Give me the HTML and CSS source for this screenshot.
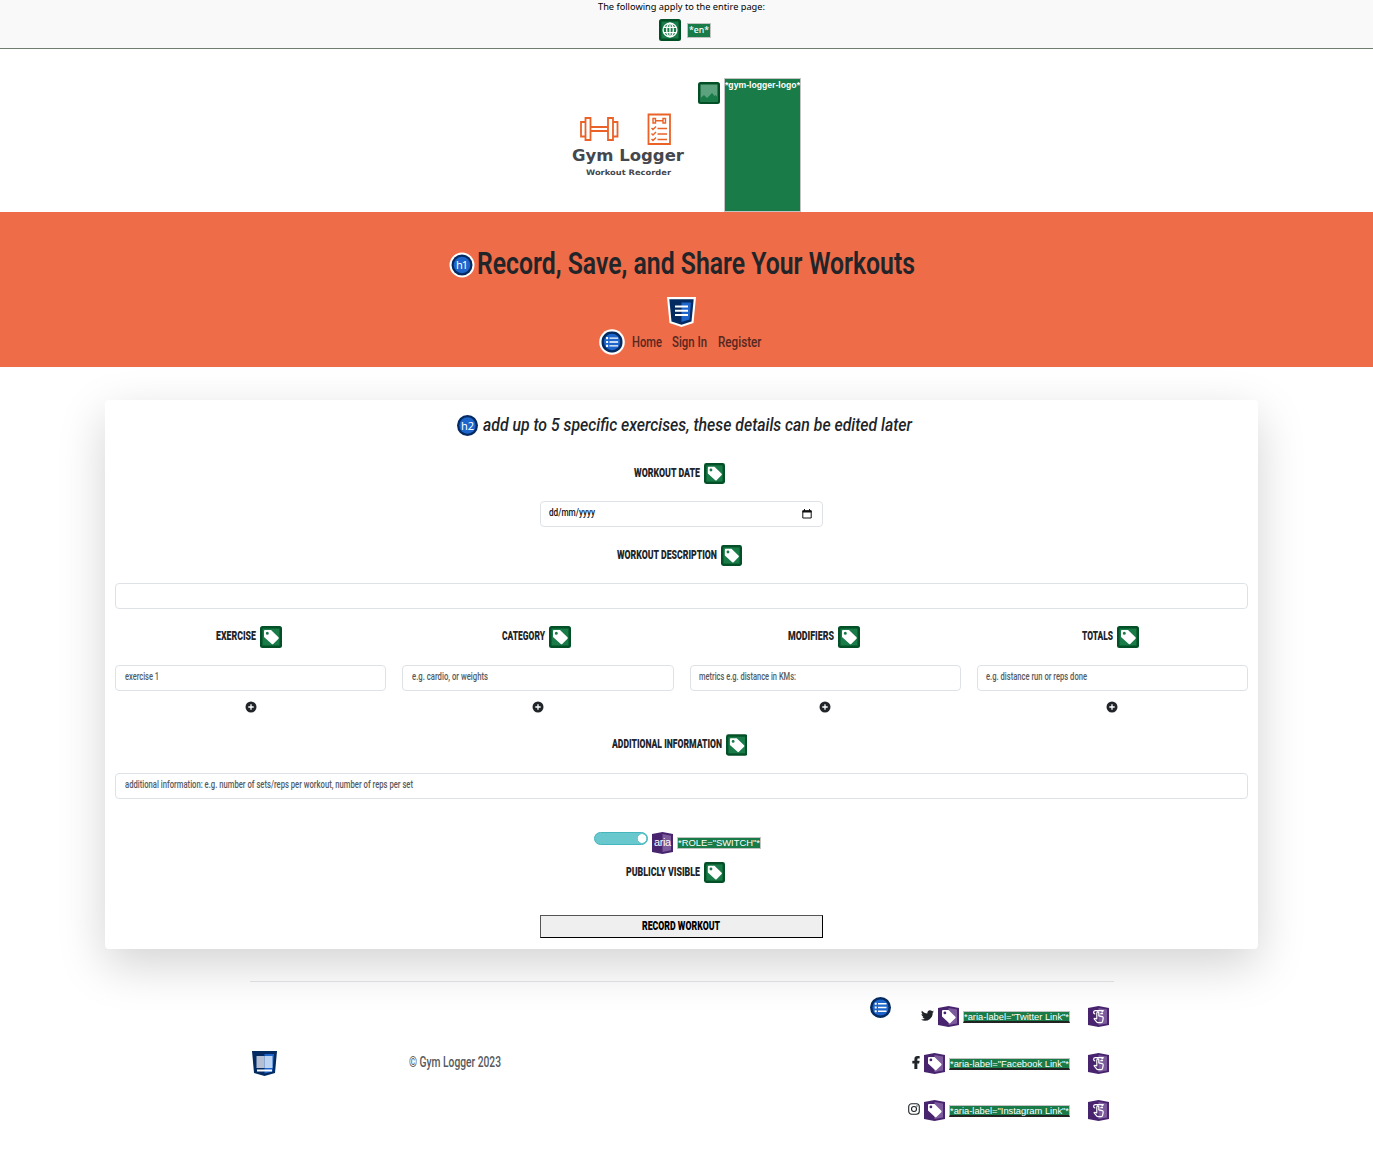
FILE: index.html
```html
<!DOCTYPE html>
<html lang="en">
<head>
<meta charset="utf-8">
<title>Gym Logger</title>
<link rel="stylesheet" href="styles.css">
</head>
<body>
<svg class="defs" width="0" height="0">
  <symbol id="tag" viewBox="0 0 22 22">
    <rect width="22" height="22" rx="2.5" fill="#035027"/><rect x="2.5" y="2.5" width="17" height="17" fill="#187b48"/>
    <path fill="#fff" fill-rule="evenodd" d="M4 5a1 1 0 0 1 1-1h6l7.500 7.300a1 1 0 0 1 0 1.400l-5.300 5.300a1 1 0 0 1-1.400 0L4 11zM7.300 5.800a1.500 1.500 0 1 0 0 3 1.500 1.500 0 0 0 0-3z"/>
  </symbol>
  <symbol id="hex" viewBox="0 0 21 21">
    <path fill="#48246f" d="M0 2 10.500 0 21 2V19L10.500 21 0 19z"/><path fill="#7c5a9c" d="M10.500 2 19 3.500V17.500L10.500 19z"/>
  </symbol>
  <symbol id="atag" viewBox="0 0 21 21">
    <use href="#hex" width="21" height="21"/>
    <path fill="#fff" fill-rule="evenodd" d="M4 5a1 1 0 0 1 1-1h5.500l6.800 6.800a1 1 0 0 1 0 1.400l-4.900 4.900a1 1 0 0 1-1.400 0L4 10.500zM6.900 5.500a1.400 1.400 0 1 0 0 2.800 1.400 1.400 0 0 0 0-2.800z"/>
  </symbol>
  <symbol id="touch" viewBox="0 0 21 21">
    <use href="#hex" width="21" height="21"/>
    <path fill="none" stroke="#fff" stroke-width="1.200" stroke-linejoin="round" stroke-linecap="round" d="M8.800 12.200V6.900a1 1 0 0 1 2 0V9.800l3.400.9c.8.200 1.100.6 1 1.400l-.6 3.300c-.2.900-.6 1.200-1.300 1.200H10c-.7 0-1-.2-1.400-.7L6 12.700c.5-.8 1.300-.6 2.800.2M6.800 7.800C5 7.300 5.300 4.700 7.300 4.700h8M15.300 4.700 14 6M12.800 7.700h1.800"/>
  </symbol>
  <symbol id="list" viewBox="0 0 21 21">
    <circle cx="10.500" cy="10.500" r="10.500" fill="#042a62"/><circle cx="10.500" cy="10.500" r="8" fill="#1d65ca"/>
    <path fill="#fff" d="M4.700 5.700h2v2h-2zM4.700 9.500h2v2h-2zM4.700 13.300h2v2h-2zM8 6h8.500v1.400H8zM8 9.800h8.500v1.400H8zM8 13.600h8.500V15H8z"/>
  </symbol>
  <symbol id="plus" viewBox="0 0 12 12">
    <circle cx="6" cy="6" r="5.500" fill="#212529"/><path stroke="#fff" stroke-width="1.300" d="M6 3.300v5.400M3.300 6h5.400"/>
  </symbol>
</svg>

<div class="topbar">
  <svg class="t note" width="167" height="14"><text y="10" textLength="167" lengthAdjust="spacingAndGlyphs">The following apply to the entire page:</text></svg>
  <div class="lang">
    <svg width="22" height="22" viewBox="0 0 22 22"><rect width="22" height="22" rx="2.500" fill="#035027"/><rect x="2.500" y="2.500" width="17" height="17" fill="#187b48"/><g fill="none" stroke="#fff" stroke-width="1.300"><circle cx="11" cy="11" r="6.900"/><ellipse cx="11" cy="11" rx="3.300" ry="6.900"/><path d="M11 4v14M5 8.300h12M5 13.700h12"/></g></svg>
    <span class="chip en"><svg class="t" width="20" height="12"><text y="8" textLength="20" lengthAdjust="spacingAndGlyphs">*en*</text></svg></span>
  </div>
</div>

<header class="brand">
  <svg class="logo" width="120" height="80" viewBox="0 0 120 80">
    <g fill="none" stroke="#ea6227" stroke-width="1.800">
      <path d="M17.500 9h5v22h-5zM13 13h4.500v14.500H13zM40 9h5v22h-5zM45 13h4.500v14.500H45zM22.500 18h17.500v4H22.500z"/>
      <path d="M80.500 5.500h21.500v29.500H80.500z"/>
      <path stroke-width="1.400" d="M85 9.500h2.500v4.500H85zM95 9.500h2.500v4.500H95zM87.500 11.700H95M83.500 19l1.500 1.500 3-3M89.500 19.500H99M83.500 24.500l1.500 1.500 3-3M89.500 25H99M83.500 30 85 31.500l3-3M89.500 30.500H99"/>
    </g>
    <text class="name" x="4" y="52" textLength="112" lengthAdjust="spacingAndGlyphs">Gym Logger</text>
    <text class="sub" x="18" y="66" textLength="85" lengthAdjust="spacingAndGlyphs">Workout Recorder</text>
  </svg>
  <svg class="pic" width="22" height="22" viewBox="0 0 22 22"><rect width="22" height="22" rx="2.500" fill="#035027"/><rect x="2.500" y="2.500" width="17" height="17" fill="#5ca27f"/><path fill="#187b48" d="M2.500 16 6 13l3 3 5-5 2.500 3 1-1 2 2v4.500h-17z"/></svg>
  <span class="chip alt"><svg class="t" width="75" height="14"><text y="9" textLength="75" lengthAdjust="spacingAndGlyphs">*gym-logger-logo*</text></svg></span>
</header>

<section class="hero">
  <div class="title">
    <svg width="26" height="26" viewBox="0 0 26 26"><circle cx="13" cy="13" r="12.500" fill="#fff"/><circle cx="13" cy="13" r="10.500" fill="#042a62"/><circle cx="13" cy="13" r="8.300" fill="#1d65ca"/><text class="ic" x="7" y="17" textLength="12">h1</text></svg>
    <h1><svg class="t" width="438" height="40"><text y="30" textLength="438" lengthAdjust="spacingAndGlyphs">Record, Save, and Share Your Workouts</text></svg></h1>
  </div>
  <svg class="shield" width="29" height="30" viewBox="0 0 29 30"><path fill="#fff" d="M0 0h29l-2.500 26L14.500 30 2.500 26z"/><path fill="#042a62" d="M2.300 2.200h24.400L24.500 24.500l-10 3.200-10-3.200z"/><path fill="#1d65ca" d="M14.500 5.500h9.500l-1.500 17-8 2.500z"/><path fill="#fff" d="M8 8.500h13v2H8zM8 12.800h13v2H8zM8 17h13v2H8z"/></svg>
  <nav>
    <svg width="26" height="26" viewBox="0 0 26 26"><circle cx="13" cy="13" r="12.800" fill="#fff"/><use href="#list" x="2.300" y="2.300" width="21.400" height="21.400"/></svg>
    <svg class="t" width="30" height="26"><text y="18" textLength="30" lengthAdjust="spacingAndGlyphs">Home</text></svg>
    <svg class="t" width="35" height="26"><text y="18" textLength="35" lengthAdjust="spacingAndGlyphs">Sign In</text></svg>
    <svg class="t" width="44" height="26"><text y="18" textLength="43.500" lengthAdjust="spacingAndGlyphs">Register</text></svg>
  </nav>
</section>

<main class="card">
  <div class="lead">
    <svg width="21" height="21" viewBox="0 0 21 21"><circle cx="10.500" cy="10.500" r="10.500" fill="#042a62"/><circle cx="10.500" cy="10.500" r="8.200" fill="#1d65ca"/><text class="ic" x="4" y="15" textLength="13">h2</text></svg>
    <h2><svg class="t" width="430" height="25"><text y="16" textLength="429" lengthAdjust="spacingAndGlyphs">add up to 5 specific exercises, these details can be edited later</text></svg></h2>
  </div>
  <div class="label first"><svg class="t" width="66" height="22"><text y="14" textLength="66" lengthAdjust="spacingAndGlyphs">WORKOUT DATE</text></svg><svg width="21" height="21"><use href="#tag"/></svg></div>
  <div class="field date">
    <svg class="t" width="47" height="24"><text y="14" textLength="46" lengthAdjust="spacingAndGlyphs">dd/mm/yyyy</text></svg>
    <svg width="10" height="10" viewBox="0 0 10 10"><path fill="none" stroke="#111" d="M.8 2h8.400v7H.8z"/><path fill="#111" d="M.5 1.200h9v2.300h-9zM2 0h1v2H2zM7 0h1v2H7z"/></svg>
  </div>
  <div class="label"><svg class="t" width="100" height="22"><text y="14" textLength="100" lengthAdjust="spacingAndGlyphs">WORKOUT DESCRIPTION</text></svg><svg width="21" height="21"><use href="#tag"/></svg></div>
  <div class="field"></div>
  <div class="cols">
    <div class="col"><div class="label"><svg class="t" width="40" height="22"><text y="14" textLength="40" lengthAdjust="spacingAndGlyphs">EXERCISE</text></svg><svg width="22" height="22"><use href="#tag"/></svg></div><div class="field ph"><svg class="t" width="34" height="24"><text y="14" textLength="34" lengthAdjust="spacingAndGlyphs">exercise 1</text></svg></div><svg class="add" width="12" height="12"><use href="#plus"/></svg></div>
    <div class="col"><div class="label"><svg class="t" width="43" height="22"><text y="14" textLength="43" lengthAdjust="spacingAndGlyphs">CATEGORY</text></svg><svg width="22" height="22"><use href="#tag"/></svg></div><div class="field ph"><svg class="t" width="76" height="24"><text y="14" textLength="76" lengthAdjust="spacingAndGlyphs">e.g. cardio, or weights</text></svg></div><svg class="add" width="12" height="12"><use href="#plus"/></svg></div>
    <div class="col"><div class="label"><svg class="t" width="46" height="22"><text y="14" textLength="46" lengthAdjust="spacingAndGlyphs">MODIFIERS</text></svg><svg width="22" height="22"><use href="#tag"/></svg></div><div class="field ph"><svg class="t" width="98" height="24"><text y="14" textLength="97" lengthAdjust="spacingAndGlyphs">metrics e.g. distance in KMs:</text></svg></div><svg class="add" width="12" height="12"><use href="#plus"/></svg></div>
    <div class="col"><div class="label"><svg class="t" width="31" height="22"><text y="14" textLength="31" lengthAdjust="spacingAndGlyphs">TOTALS</text></svg><svg width="22" height="22"><use href="#tag"/></svg></div><div class="field ph"><svg class="t" width="101" height="24"><text y="14" textLength="101" lengthAdjust="spacingAndGlyphs">e.g. distance run or reps done</text></svg></div><svg class="add" width="12" height="12"><use href="#plus"/></svg></div>
  </div>
  <div class="label info"><svg class="t" width="110" height="22"><text y="14" textLength="110" lengthAdjust="spacingAndGlyphs">ADDITIONAL INFORMATION</text></svg><svg width="21.500" height="22"><use href="#tag"/></svg></div>
  <div class="field ph"><svg class="t" width="289" height="24"><text y="14" textLength="288" lengthAdjust="spacingAndGlyphs">additional information: e.g. number of sets/reps per workout, number of reps per set</text></svg></div>
  <div class="switch-row">
    <span class="switch"></span>
    <svg class="aria" width="21" height="22" viewBox="0 0 21 21" preserveAspectRatio="none"><use href="#hex" width="21" height="21"/><text class="ic" x="2" y="13.500" textLength="17">aria</text></svg>
    <span class="chip role"><svg class="t" width="82" height="11"><text y="8" textLength="82" lengthAdjust="spacingAndGlyphs">*ROLE="SWITCH"*</text></svg></span>
  </div>
  <div class="label public"><svg class="t" width="74" height="22"><text y="14" textLength="74" lengthAdjust="spacingAndGlyphs">PUBLICLY VISIBLE</text></svg><svg width="21" height="21"><use href="#tag"/></svg></div>
  <div class="submit"><svg class="t" width="79" height="21"><text y="14" textLength="78" lengthAdjust="spacingAndGlyphs">RECORD WORKOUT</text></svg></div>
</main>

<footer>
  <svg class="foot" width="25" height="25" viewBox="0 0 25 25"><path fill="#042a62" d="M0 0h25l-2 22-10.500 3L2 22z"/><path fill="#1d65ca" d="M12.500 3H22l-1.500 17.500-8 2z"/><path fill="#b4bfd3" d="M4.500 5h8v12h-8z"/><path fill="#bcd3f1" d="M12.500 5h8v12h-8z"/><path fill="#fff" d="M5 18.500h15v2H5z"/></svg>
  <svg class="t copy" width="92" height="24"><text y="16" textLength="92" lengthAdjust="spacingAndGlyphs">© Gym Logger 2023</text></svg>
  <svg class="ul" width="21" height="21"><use href="#list"/></svg>
  <div class="social">
    <div class="link">
      <svg class="brandic" width="13" height="13" viewBox="0 0 512 512"><path fill="#212529" d="M459.400 151.700c.3 4.500.3 9.100.3 13.600 0 138.700-105.600 298.600-298.600 298.600-59.500 0-114.700-17.200-161.100-47.100 8.400 1 16.600 1.300 25.300 1.300 49.100 0 94.200-16.600 130.300-44.800-46.100-1-84.800-31.200-98.100-72.800 6.500 1 13 1.600 19.800 1.600 9.400 0 18.800-1.300 27.600-3.600-48.100-9.700-84.100-52-84.100-103v-1.300c14 7.800 30.200 12.700 47.400 13.300-28.300-18.800-46.800-51-46.800-87.400 0-19.500 5.200-37.400 14.300-53 51.700 63.700 129.300 105.300 216.400 109.800-1.600-7.800-2.600-15.900-2.600-24 0-57.800 46.800-104.900 104.900-104.900 30.200 0 57.500 12.700 76.700 33.100 23.700-4.500 46.500-13.300 66.600-25.300-7.800 24.400-24.400 44.800-46.100 57.800 21.100-2.300 41.600-8.100 60.400-16.200-14.300 20.800-32.200 39.300-52.600 54.300z"/></svg>
      <svg width="21" height="21"><use href="#atag"/></svg>
      <span class="chip aria-chip"><svg class="t" width="105" height="10"><text y="8" textLength="105" lengthAdjust="spacingAndGlyphs">*aria-label="Twitter Link"*</text></svg></span>
      <svg class="tap" width="21" height="21"><use href="#touch"/></svg>
    </div>
    <div class="link">
      <svg class="brandic" width="8" height="13" viewBox="0 0 320 512"><path fill="#212529" stroke="#212529" stroke-width="18" d="M279.100 288l14.200-92.700h-88.900v-60.100c0-25.400 12.400-50.100 52.200-50.100h40.400V6.300S260.400 0 225.400 0c-73.200 0-121.100 44.400-121.100 124.700v70.600H22.900V288h81.400v224h100.200V288z"/></svg>
      <svg width="21" height="21"><use href="#atag"/></svg>
      <span class="chip aria-chip"><svg class="t" width="119" height="10"><text y="8" textLength="119" lengthAdjust="spacingAndGlyphs">*aria-label="Facebook Link"*</text></svg></span>
      <svg class="tap" width="21" height="21"><use href="#touch"/></svg>
    </div>
    <div class="link">
      <svg class="brandic" width="12" height="12" viewBox="0 0 12 12"><g fill="none" stroke="#212529" stroke-width="1.100"><rect x=".7" y=".7" width="10.600" height="10.600" rx="3"/><circle cx="6" cy="6" r="2.500"/></g><circle cx="9" cy="3" r=".7" fill="#212529"/></svg>
      <svg width="21" height="21"><use href="#atag"/></svg>
      <span class="chip aria-chip"><svg class="t" width="119" height="10"><text y="8" textLength="119" lengthAdjust="spacingAndGlyphs">*aria-label="Instagram Link"*</text></svg></span>
      <svg class="tap" width="21" height="21"><use href="#touch"/></svg>
    </div>
  </div>
</footer>
</body>
</html>
```
FILE: styles.css
```css
* { box-sizing: border-box; }
body { margin: 0; height: 1149px; overflow: hidden; background: #fff; color: #212529; font-family: Roboto, "Liberation Sans", sans-serif; }
svg { display: block; flex: none; }
.defs { position: absolute; }
.t { overflow: visible; fill: currentColor; }
h1, h2 { margin: 0; }

.topbar { height: 49px; background: #f9f9f9; border-bottom: 1px solid #6f7f6f; padding-right: 10px; display: flex; flex-direction: column; align-items: center; }
.note { font: 9.5px "Noto Sans", "Open Sans", sans-serif; color: #000; }
.lang { display: flex; align-items: center; gap: 6px; margin-top: 5px; padding-left: 7px; }
.chip { display: block; flex: none; background: #187b48; border: 1px solid #c3c3c3; color: #fff; font-family: "Liberation Sans", Arial, sans-serif; }
.en { width: 24px; height: 15px; padding: 1px; font: 500 9.5px "Noto Sans", sans-serif; }

.brand { height: 163px; display: flex; align-items: flex-start; padding-left: 568px; }
.logo { margin-top: 60px; }
.logo .name { font: bold 15.5px "DejaVu Sans", sans-serif; fill: #44474d; }
.logo .sub { font: bold 7.5px "DejaVu Sans", sans-serif; fill: #44474d; }
.pic { margin: 33px 4px 0 10px; }
.alt { width: 77px; height: 134px; margin-top: 29px; font-size: 9px; font-weight: bold; }

.hero { height: 155px; background: #ee6c48; padding: 32px 10px 0 0; display: flex; flex-direction: column; align-items: center; }
.title { display: flex; height: 53px; gap: 2px; }
.title > svg { margin-top: 8px; }
h1 { font-size: 31px; font-weight: 600; }
.ic { font: 11px "Noto Sans", sans-serif; fill: #fff; }
.aria .ic { font-family: "Liberation Sans", sans-serif; }
nav { display: flex; margin-top: 2px; gap: 10.5px; padding-right: 2.5px; font-size: 14.5px; font-weight: 500; color: #57271f; }
nav svg:first-child { margin-right: -4px; }

.card { width: 1153px; height: 549px; margin: 33px 0 0 105px; padding: 15px 10px 0; border-radius: 4px; background: #fff; box-shadow: 0 16px 48px rgba(0,0,0,.175); }
.lead { display: flex; justify-content: center; gap: 5px; height: 21px; padding-left: 6px; }
h2 { font-size: 19px; font-style: italic; font-weight: 500; }
.label { height: 22px; margin: 18px 0 17px; padding-right: 4px; display: flex; justify-content: center; gap: 4px; font-size: 12.5px; font-weight: 900; }
.label.first { margin-top: 27px; margin-bottom: 16px; }
.field { height: 26px; border: 1px solid #dee2e6; border-radius: 4px; padding: 0 9px; display: flex; font-size: 10px; font-weight: 500; }
.field.date { width: 283px; margin: 0 auto; padding: 0 10px 0 8px; justify-content: space-between; align-items: center; color: #111; }
.date + .label { margin-bottom: 16px; }
.ph { color: #555b61; padding-left: 8.5px; }
.cols { display: grid; grid-template-columns: repeat(4, 1fr); gap: 16px; margin-top: 17px; }
.col .label { margin: 0 0 17px; padding-right: 3px; }
.add { margin: 10px auto 0; }
.info { margin-top: 21px; }
.switch-row { display: flex; justify-content: center; gap: 4px; margin-top: 33px; height: 22px; padding-right: 8px; }
.switch { width: 54px; height: 13px; border: 1px solid #45b6bd; border-radius: 7px; background: radial-gradient(circle at 47px 5.5px, #fff 4px, transparent 4.6px), #69c8cd; }
.role { width: 84px; height: 12px; margin-top: 5px; font-size: 9.5px; }
.label.public { margin: 8px 0 31px; padding-right: 13px; }
.submit { width: 283px; height: 23px; margin: 0 auto; border: 1px solid #000; border-top-color: #555; border-left-color: #555; background: #efefef; color: #000; display: flex; justify-content: center; font-size: 12.5px; font-weight: 900; }

footer { position: relative; width: 864px; height: 167px; margin: 32px 0 0 250px; border-top: 1px solid #dadcdf; display: flex; }
.foot { margin: 69px 0 0 2px; }
.copy { margin: 69px 0 0 132px; font-size: 14px; font-weight: 500; color: #55595d; }
.ul { margin: 15px 0 0 auto; }
.social { width: 218px; padding: 24px 5px 0 0; display: flex; flex-direction: column; gap: 26px; margin-left: 5px; }
.link { display: flex; justify-content: flex-end; gap: 4px; height: 21px; }
.brandic { margin-top: 3px; }
.aria-chip { height: 12px; margin-top: 5px; border-bottom: 2px solid #222; font-size: 9px; }
.tap { margin-left: 14px; }
```
